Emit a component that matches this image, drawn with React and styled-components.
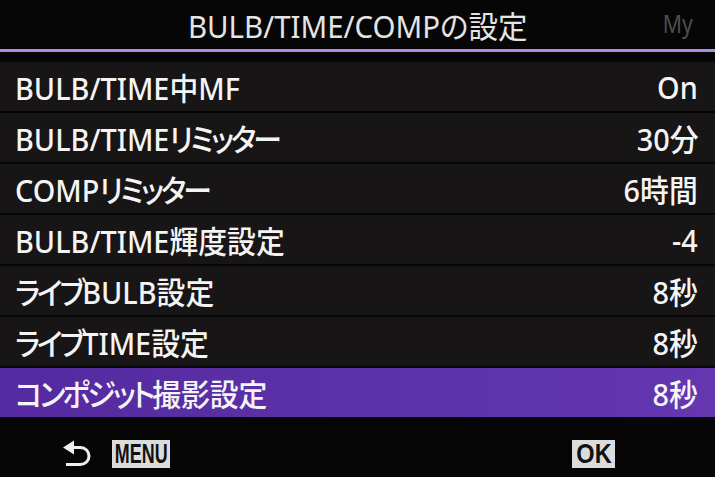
import React from "react";
import styled, { createGlobalStyle } from "styled-components";

const Global = createGlobalStyle`
  html, body { margin: 0; padding: 0; background: #060606; }
  body {
    font-family: "Noto Sans", "Noto Sans CJK JP", sans-serif;
    font-feature-settings: "palt";
  }
`;

const Screen = styled.div`
  width: 715px;
  height: 477px;
  background: #060606;
  display: flex;
  flex-direction: column;
  overflow: hidden;
`;

const TitleBar = styled.header`
  height: 49px;
  position: relative;
  display: flex;
  align-items: center;
  justify-content: center;
  color: #e4e4e4;
  font-size: 31px;
  border-bottom: 3px solid #a98cdb;
`;

const Condensed = styled.span`
  display: inline-block;
  transform: scaleX(${(p) => p.$sx || 0.93});
  transform-origin: ${(p) => p.$origin || "center"} center;
  white-space: nowrap;
`;

/* katakana runs are set tighter, like the camera's proportional kana */
const Kana = styled.span`
  letter-spacing: -3px;
`;

const MyTab = styled.span`
  position: absolute;
  right: 20px;
  top: 6px;
  color: #4e4e4e;
  font-size: 25px;
`;

const List = styled.ul`
  list-style: none;
  margin: 0;
  padding: 10px 0 0;
  display: flex;
  flex-direction: column;
  gap: 2px;
`;

const Row = styled.li`
  height: 49px;
  display: flex;
  align-items: center;
  justify-content: space-between;
  padding: 0 17px 0 15px;
  background: ${(p) =>
    p.$active ? "linear-gradient(90deg, #55299f, #5e33aa 60%, #6436b0)" : "#171515"};
  color: #f4f4f4;
  font-size: 31px;
  font-weight: 500;
`;

const Footer = styled.footer`
  flex: 1;
  display: flex;
  align-items: center;
  justify-content: space-between;
  padding: 14px 100px 0 62px;
`;

const Hint = styled.div`
  display: flex;
  align-items: center;
  gap: 20px;
`;

const Key = styled.span`
  display: inline-flex;
  align-items: center;
  justify-content: center;
  width: ${(p) => p.$w}px;
  height: 28px;
  background: #dcdcdc;
  color: #111;
  font-family: "Liberation Sans", Arial, sans-serif;
  font-weight: 700;
  font-size: 28px;
  line-height: 1;
`;

/* the key caption is squeezed horizontally; negative margins give the
   box the caption's squeezed width instead of its natural width */
const KeyText = styled.span`
  display: inline-block;
  transform: scaleX(${(p) => p.$sx});
  margin: 0 ${(p) => -p.$trim}px;
  white-space: nowrap;
`;

const BackIcon = () => (
  <svg width="30" height="28" viewBox="0 0 30 28">
    <path d="M1 7.5 L12 0.5 L12 14.5 Z" fill="#eee" />
    <path
      d="M11 7.5 H18.5 A8.5 8.5 0 0 1 18.5 24.5 H4"
      fill="none"
      stroke="#eee"
      strokeWidth="3"
    />
  </svg>
);

const KANA = /([\u30A0-\u30FF]+)/;

function Label({ text }) {
  return text
    .split(KANA)
    .filter(Boolean)
    .map((part, i) => (KANA.test(part) ? <Kana key={i}>{part}</Kana> : part));
}

const items = [
  ["BULB/TIME中MF", "On"],
  ["BULB/TIMEリミッター", "30分"],
  ["COMPリミッター", "6時間"],
  ["BULB/TIME輝度設定", "-4"],
  ["ライブBULB設定", "8秒"],
  ["ライブTIME設定", "8秒"],
  ["コンポジット撮影設定", "8秒"],
];

export default function App() {
  return (
    <Screen>
      <Global />
      <TitleBar>
        <Condensed $sx={0.95}>BULB/TIME/COMPの設定</Condensed>
        <MyTab>
          <Condensed $sx={0.85}>My</Condensed>
        </MyTab>
      </TitleBar>
      <List>
        {items.map(([label, value], i) => (
          <Row key={label} $active={i === items.length - 1}>
            <Condensed $origin="left">
              <Label text={label} />
            </Condensed>
            <Condensed $origin="right">{value}</Condensed>
          </Row>
        ))}
      </List>
      <Footer>
        <Hint>
          <BackIcon />
          <Key $w={58}>
            <KeyText $sx={0.64} $trim={15}>MENU</KeyText>
          </Key>
        </Hint>
        <Key $w={43}>
          <KeyText $sx={0.84} $trim={4}>OK</KeyText>
        </Key>
      </Footer>
    </Screen>
  );
}
